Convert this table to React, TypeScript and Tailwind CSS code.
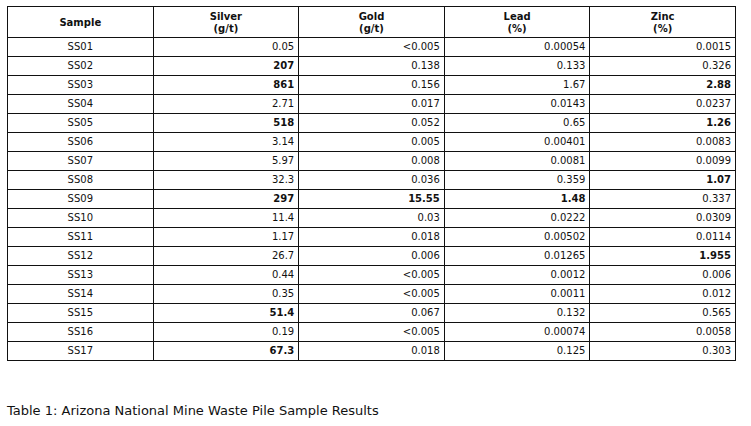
import React from "react";

type Cell = { v: string; b?: boolean };
const rows: [string, Cell, Cell, Cell, Cell][] = [
  ["SS01", { v: "0.05" }, { v: "<0.005" }, { v: "0.00054" }, { v: "0.0015" }],
  ["SS02", { v: "207", b: true }, { v: "0.138" }, { v: "0.133" }, { v: "0.326" }],
  ["SS03", { v: "861", b: true }, { v: "0.156" }, { v: "1.67" }, { v: "2.88", b: true }],
  ["SS04", { v: "2.71" }, { v: "0.017" }, { v: "0.0143" }, { v: "0.0237" }],
  ["SS05", { v: "518", b: true }, { v: "0.052" }, { v: "0.65" }, { v: "1.26", b: true }],
  ["SS06", { v: "3.14" }, { v: "0.005" }, { v: "0.00401" }, { v: "0.0083" }],
  ["SS07", { v: "5.97" }, { v: "0.008" }, { v: "0.0081" }, { v: "0.0099" }],
  ["SS08", { v: "32.3" }, { v: "0.036" }, { v: "0.359" }, { v: "1.07", b: true }],
  ["SS09", { v: "297", b: true }, { v: "15.55", b: true }, { v: "1.48", b: true }, { v: "0.337" }],
  ["SS10", { v: "11.4" }, { v: "0.03" }, { v: "0.0222" }, { v: "0.0309" }],
  ["SS11", { v: "1.17" }, { v: "0.018" }, { v: "0.00502" }, { v: "0.0114" }],
  ["SS12", { v: "26.7" }, { v: "0.006" }, { v: "0.01265" }, { v: "1.955", b: true }],
  ["SS13", { v: "0.44" }, { v: "<0.005" }, { v: "0.0012" }, { v: "0.006" }],
  ["SS14", { v: "0.35" }, { v: "<0.005" }, { v: "0.0011" }, { v: "0.012" }],
  ["SS15", { v: "51.4", b: true }, { v: "0.067" }, { v: "0.132" }, { v: "0.565" }],
  ["SS16", { v: "0.19" }, { v: "<0.005" }, { v: "0.00074" }, { v: "0.0058" }],
  ["SS17", { v: "67.3", b: true }, { v: "0.018" }, { v: "0.125" }, { v: "0.303" }],
];

const headers: [string, string | null][] = [
  ["Sample", null],
  ["Silver", "(g/t)"],
  ["Gold", "(g/t)"],
  ["Lead", "(%)"],
  ["Zinc", "(%)"],
];

export default function App() {
  return (
    <div
      className="w-[751px] h-[426px] bg-white text-[#111] pt-[6px] pl-[7px]"
      style={{ fontFamily: '"DejaVu Sans", Verdana, sans-serif' }}
    >
      <table className="table-fixed border-collapse w-[729px] text-[10px] leading-[12px]">
        <thead>
          <tr className="h-[31px]">
            {headers.map(([a, b]) => (
              <th key={a} className="border border-[#111] font-bold text-center align-middle px-0 pt-[2px] pb-0">
                <div>{a}</div>
                {b && <div>{b}</div>}
              </th>
            ))}
          </tr>
        </thead>
        <tbody>
          {rows.map(([s, ...cells]) => (
            <tr key={s} className="h-[19px]">
              <td className="border border-[#111] text-center p-0">{s}</td>
              {cells.map((c, i) => (
                <td
                  key={i}
                  className={`border border-[#111] text-right pr-[4px] p-0 ${c.b ? "font-bold" : "font-normal"}`}
                >
                  {c.v}
                </td>
              ))}
            </tr>
          ))}
        </tbody>
      </table>
      <div className="mt-[42px] text-[13px] leading-[16px] text-[#111]">
        Table 1: Arizona National Mine Waste Pile Sample Results
      </div>
    </div>
  );
}
